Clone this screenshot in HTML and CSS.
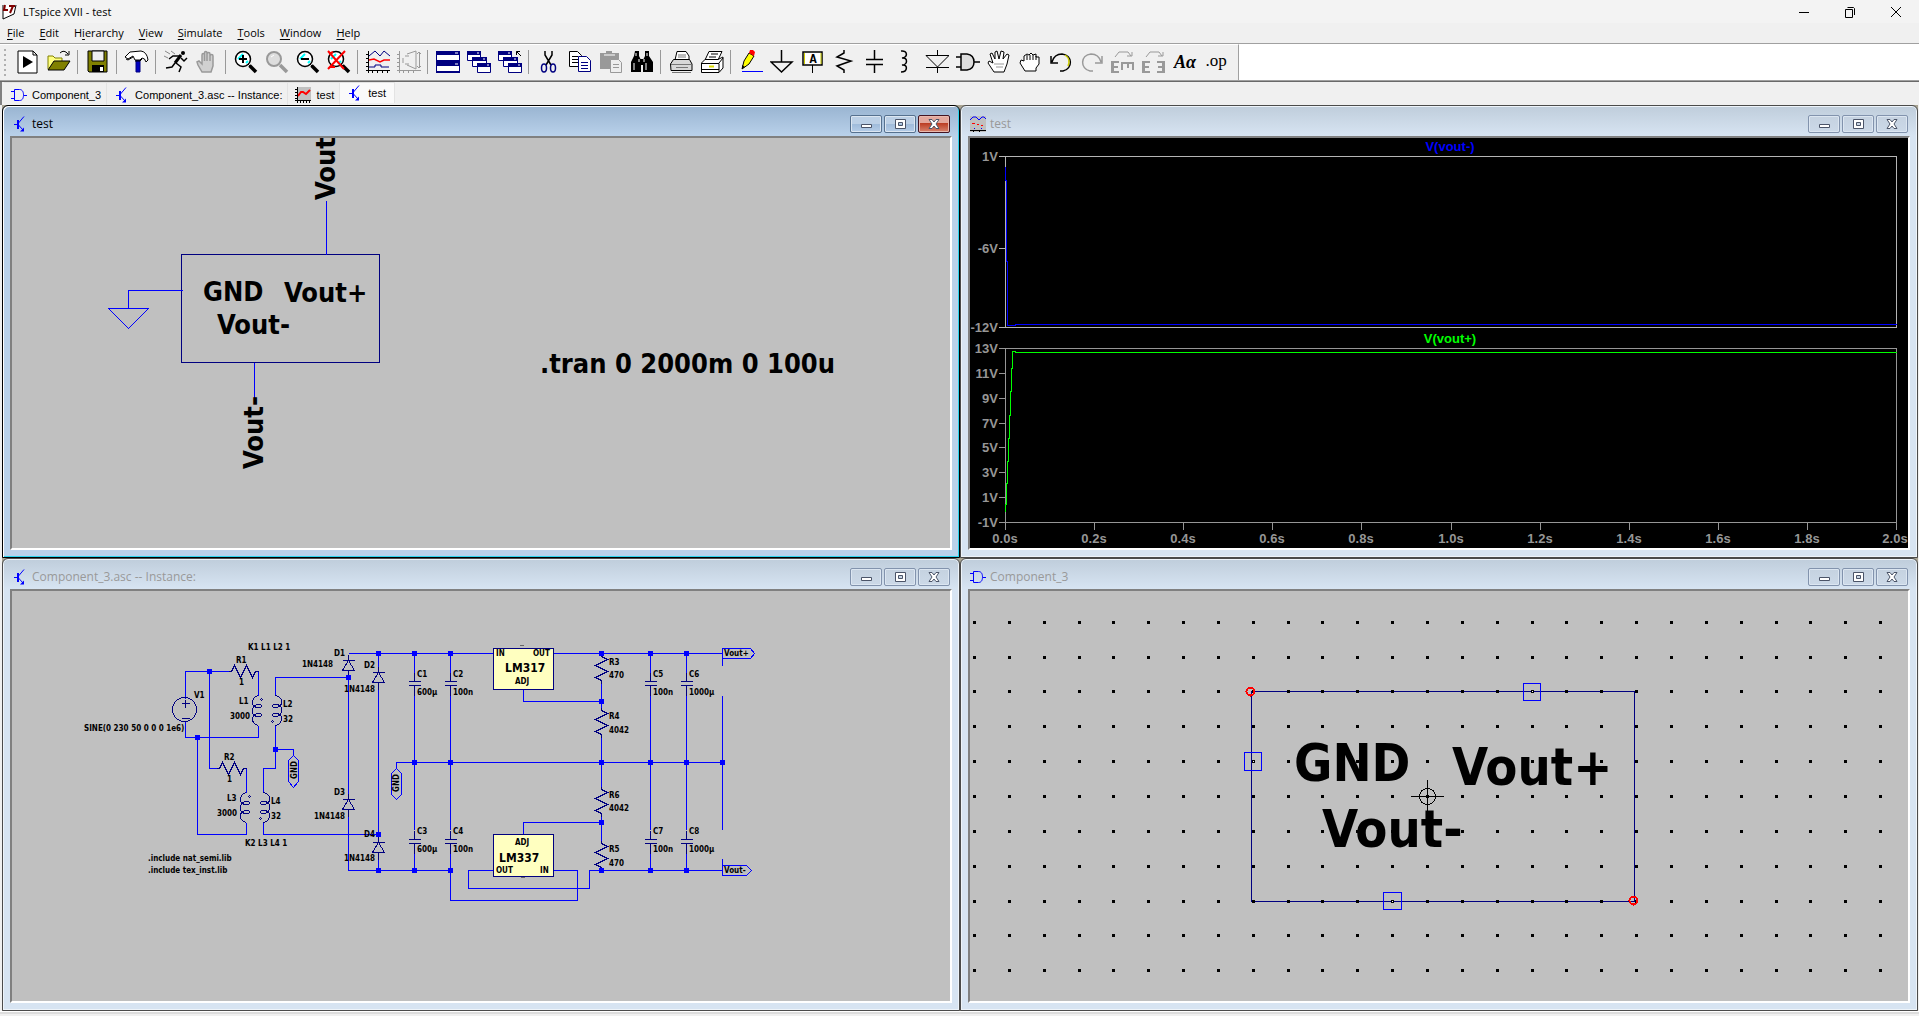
FILE: index.html
```html
<!DOCTYPE html>
<html lang="en">
<head>
<meta charset="utf-8">
<title>LTspice XVII - test</title>
<link rel="stylesheet" href="styles.css">
</head>
<body>
<svg class="sprite" aria-hidden="true">
  <symbol id="transistor" viewBox="0 0 16 16"><path class="b" d="M2 8.500H6M6.500 7L12 .5M6.500 9L11 14"/><path fill="#00f" d="M5 4H7V13H5ZM12 15.500H8L12 11.500Z"/></symbol>
  <symbol id="gate" viewBox="0 0 16 16"><path class="b" d="M0 4.500H3M0 11.500H3M3.500 2.500V13.500H8.500C12 13.500 12.500 10 12.500 8S12 2.500 8.500 2.500ZM13 8.500H16"/></symbol>
  <symbol id="wave" viewBox="0 0 16 16"><path fill="#c0c0c0" d="M0 0H16V16H0Z"/><path class="b" d="M0 4L3 1H6L9 4L12 1H14L16 3"/><path fill="#f00" d="M2 7H5V8H2ZM7 8H9V9H7ZM11 9H13V10H11Z"/><path fill="#00f" d="M4 12H5V13H4ZM11 12H12V13H11Z"/><path fill="#000" d="M0 14H16V15H0ZM3 15H4V16H3ZM9 15H10V16H9Z"/></symbol>
  <symbol id="graph" viewBox="0 0 16 16"><path fill="#c0c0c0" d="M2 0H16V13H2Z"/><path d="M3 9L6 5H8L11 7L15 3" fill="none" stroke="#f00" stroke-width="2"/><path d="M2.500 0V16M0 2.500H2M0 5.500H2M0 8.500H2M0 11.500H2M0 13.500H16M5.500 14V16M8.500 14V16M11.500 14V16M14.500 14V16" fill="none" stroke="#000"/></symbol>
  <symbol id="w-min" viewBox="0 0 12 10"><path d="M1.500 5.500H11.500V8.500H1.500Z" fill="#fff" stroke="#4b5468"/></symbol>
  <symbol id="w-max" viewBox="0 0 12 10"><path d="M1.500 .5H11.500V9.500H1.500ZM4.500 3.500H8.500V6.500H4.500Z" fill="#fff" fill-rule="evenodd" stroke="#4b5468"/></symbol>
  <symbol id="w-close" viewBox="0 0 12 10"><path d="M1 .5H4L6 3L8 .5H11L8 5L11 9.500H8L6 7L4 9.500H1L4 5Z" fill="#fff" stroke="#4b5468"/></symbol>
  <symbol id="lens" viewBox="0 0 24 24"><circle cx="9" cy="9" r="7.500" fill="#fff" stroke="#000" stroke-width="1.500"/><path d="M4 9L9 4M12 13L14 11" stroke="#0ff" stroke-width="2"/><path d="M14 14L16 16" stroke="#000"/><path d="M15.500 15.500L22 22" stroke="#000" stroke-width="3.500"/></symbol>
  <symbol id="cascade" viewBox="0 0 24 24"><path d="M.5 1.500H13.500V10.500H.5ZM5.500 7.500H19.500V16.500H5.500ZM10.500 13.500H23.500V22.500H10.500Z" fill="#fff" stroke="#000080"/><path d="M0 1H14V5H0ZM5 7H20V11H5ZM10 13H24V17H10Z" fill="#000080"/><path d="M10 3H12M16 9H18M20 15H22" stroke="#fff"/></symbol>
  <symbol id="hand" viewBox="0 0 24 24"><path d="M7 22L3 15L2 12L4 11L7 14V5C7 3 9.500 3 9.500 5V3C9.500 1 12 1 12 3V4C12 2 15 2 15 4V6C15 4 18 4 18 6V16L16 22Z"/><path d="M9.500 5V11M12 4V11M15 6V11" fill="none"/></symbol>
  <symbol id="res" overflow="visible"><path d="M0 0V3L6 6L-6 12L6 18L-6 24L0 27V30"/></symbol>
  <symbol id="ind" overflow="visible"><path d="M0 0C-4 1-6 3-6 7S-4 12 0 12S5 9 0 9S-6 12-6 16S-4 21 0 21S5 18 0 18S-6 21-6 24S-4 29 0 30M3 3L4 4L3 5L2 4Z"/></symbol>
  <symbol id="dio" overflow="visible"><path d="M-6 0H6M0-6V0L6 10H-6L0 0M0 10V17"/></symbol>
  <symbol id="cap" overflow="visible"><path d="M0-9V0M-6 0H6M-6 4H6M0 4V14"/></symbol>
</svg>

<header class="titlebar">
  <svg class="app-icon" viewBox="0 0 16 16"><path d="M2 1V15L13 10L15 1" fill="#fff" stroke="#000"/><path d="M4 1L3 6H7M8 2H14M12 2L9 9" fill="none" stroke="#800000" stroke-width="2"/></svg>
  <h1>LTspice XVII - test</h1>
  <div class="caption">
    <button aria-label="Minimize"><svg viewBox="0 0 12 12"><path d="M1 6.500H11"/></svg></button>
    <button aria-label="Restore"><svg viewBox="0 0 12 12"><path d="M1.500 3.500H8.500V11.500H1.500ZM3.500 1.500H9.500L10.500 2.500V9"/></svg></button>
    <button aria-label="Close"><svg viewBox="0 0 12 12"><path d="M1 1L11 11M11 1L1 11"/></svg></button>
  </div>
</header>
<nav class="menubar">
  <button><u>F</u>ile</button><button><u>E</u>dit</button><button>H<u>i</u>erarchy</button><button><u>V</u>iew</button><button><u>S</u>imulate</button><button><u>T</u>ools</button><button><u>W</u>indow</button><button><u>H</u>elp</button>
</nav>
<div class="toolrow">
<div class="toolbar" role="toolbar" aria-label="Main">
  <span class="grip"></span>
  <button aria-label="New schematic"><svg viewBox="0 0 24 24"><path d="M2 1H17L21 5V23H2Z" fill="#fff" stroke="#000"/><path d="M17 1V5H21" fill="none" stroke="#000"/><path d="M7 6L17 12L7 18Z"/></svg></button>
  <button aria-label="Open"><svg viewBox="0 0 24 24"><path d="M1 19V6H6L8 8H15V12" fill="#ffff80" stroke="#808000"/><path d="M1 20L7 11H23L17 20Z" fill="#808000" stroke="#000"/><path d="M13 3Q17-1 21 4M22 1V5H18" fill="none" stroke="#000"/></svg></button>
  <span class="sep"></span>
  <button aria-label="Save"><svg viewBox="0 0 24 24"><path d="M2 1H21V22H3L2 21Z" fill="#808000" stroke="#000"/><path d="M6 1H18V11H6Z" fill="#f0f0f0" stroke="#000"/><path d="M6 15H18V22H6Z"/><path d="M14 17H17V21H14Z" fill="#fff"/></svg></button>
  <span class="sep"></span>
  <button aria-label="Control panel"><svg viewBox="0 0 24 24"><path d="M11 10H15V22H11Z" fill="#0000c0" stroke="#000080"/><path d="M0 7L5 2L16 1Q22 2 23 10L21 12Q20 8 17 8L15 10H10L8 6L3 9Z" fill="#fff" stroke="#000"/><path d="M1 9L3 10L8 7M10 11H15L17 9" fill="none" stroke="#000"/></svg></button>
  <span class="sep"></span>
  <button aria-label="Run"><svg viewBox="0 0 24 24"><circle cx="19" cy="3" r="2"/><path d="M17 5L11 13" stroke="#000" stroke-width="3"/><path d="M16 6L9 6L5 9M17 8L20 11L23 8M12 13L17 17L15 22M11 13L8 17L2 18" fill="none" stroke="#000" stroke-width="1.500"/><path d="M1 1L6 4M7 1L11 4M0 6L4 8" stroke="#888"/></svg></button>
  <button aria-label="Halt" disabled><svg viewBox="0 0 24 24" fill="#d0d0d0" stroke="#999" stroke-width="1.500"><use href="#hand"/></svg></button>
  <span class="sep"></span>
  <button aria-label="Zoom in"><svg viewBox="0 0 24 24"><use href="#lens"/><path d="M9 5V13M5 9H13" stroke="#000" stroke-width="2"/></svg></button>
  <button aria-label="Pan" disabled><svg viewBox="0 0 24 24" fill="none" stroke="#999"><circle cx="9" cy="9" r="7" stroke-width="2" fill="#ddd"/><path d="M6 7L9 5" stroke="#fff"/><path d="M15 15L22 22" stroke-width="3.500"/></svg></button>
  <button aria-label="Zoom out"><svg viewBox="0 0 24 24"><use href="#lens"/><path d="M5 9H13" stroke="#000" stroke-width="2"/></svg></button>
  <button aria-label="Zoom to fit"><svg viewBox="0 0 24 24"><use href="#lens"/><path d="M1 1L17 19M18 1L1 19M2 4L6 2M3 17H8" stroke="#f00" stroke-width="2"/></svg></button>
  <span class="sep"></span>
  <button aria-label="Autorange"><svg viewBox="0 0 24 24" fill="none" stroke="#000"><path d="M2.500 1V23M0 4.500H2M0 8.500H2M0 12.500H2M0 16.500H2M0 20.500H24M6.500 20V23M11.500 20V23M16.500 20V23M21.500 20V23"/><path d="M3 6L9 1L14 6L18 1L24 6M3 17H9V15H15V17H23" stroke="#000080"/><path d="M3 10L8 9L14 12L18 10H24" stroke="#f00" stroke-width="1.500"/></svg></button>
  <button aria-label="Plot settings" disabled><svg viewBox="0 0 24 24" fill="none" stroke="#999"><path d="M2.500 1V23M0 4.500H2M0 8.500H2M0 12.500H2M0 16.500H2M0 20.500H24M6.500 20V23M11.500 20V23M16.500 20V23M22.500 2V18M10 4L19 1V19L10 15M6 8V13M8 6H12M8 14H12M20 4L22 2L24 4M20 16L22 18L24 16"/></svg></button>
  <span class="sep"></span>
  <button aria-label="Tile windows"><svg viewBox="0 0 24 24"><path d="M.5 1.500H23.500V22.500H.5Z" fill="#fff" stroke="#000080"/><path d="M0 1H24V5H0ZM0 10H24V16H0ZM0 21H24V23H0Z" fill="#000080"/><path d="M19 3H22M19 14H22" stroke="#fff"/></svg></button>
  <button aria-label="Cascade windows"><svg viewBox="0 0 24 24"><use href="#cascade"/></svg></button>
  <button aria-label="Close all windows"><svg viewBox="0 0 24 24"><use href="#cascade"/><path d="M18.500 5V1.500H22M18.500 1.500L23 6" fill="none" stroke="#000"/></svg></button>
  <span class="sep"></span>
  <button aria-label="Cut"><svg viewBox="0 0 24 24" fill="none"><path d="M8 1V5L14 15M15 1V5L9 15" stroke="#000" stroke-width="1.500"/><ellipse cx="7" cy="18" rx="2.500" ry="4" stroke="#000080" stroke-width="1.500"/><ellipse cx="16" cy="18" rx="2.500" ry="4" stroke="#000080" stroke-width="1.500"/></svg></button>
  <button aria-label="Copy"><svg viewBox="0 0 24 24"><path d="M1.500 1.500H9.500L13.500 5.500V16.500H1.500Z" fill="#fff" stroke="#000"/><path d="M4 6.500H10M4 9.500H11M4 12.500H10" stroke="#000"/><path d="M10.500 6.500H18.500L22.500 10.500V21.500H10.500Z" fill="#fff" stroke="#000080"/><path d="M13 12.500H20M13 15.500H20M13 18.500H20" stroke="#000080"/></svg></button>
  <button aria-label="Paste" disabled><svg viewBox="0 0 24 24"><path d="M1 3H7V1H13V3H20V19H1Z" fill="#999"/><path d="M5 4H16V6H5Z" fill="#ccc"/><path d="M11.500 9.500H19.500L22.500 12.500V22.500H11.500Z" fill="#eee" stroke="#999"/><path d="M14 14.500H20M14 17.500H20" stroke="#999"/></svg></button>
  <button aria-label="Find"><svg viewBox="0 0 24 24"><path d="M5 1H9V6L11 10V22H1V12L4 6ZM15 1H19V6L23 12V22H13V10L15 6ZM10 9H14V15H10Z"/><path d="M6 3V6M17 3V6M4 13V20M16 13V20M9 9V12M14 9V12" stroke="#fff"/></svg></button>
  <span class="sep"></span>
  <button aria-label="Print"><svg viewBox="0 0 24 24" stroke="#000"><path d="M8 1.500H17L20 6V10H6Z" fill="#fff"/><path d="M4.500 9.500H20.500L23 14V20.500H2L1.500 14Z" fill="#d8d8d8"/><path d="M2 14.500H22M3 22.500H22M9 5H17M9 7H17M7 17.500H19" stroke="#777"/></svg></button>
  <button aria-label="Print setup"><svg viewBox="0 0 24 24" stroke="#000"><path d="M9 1.500H22L18 10H5Z" fill="#fff"/><path d="M5 9.500H18L23 7V18L19 22.500H1.500V13Z" fill="#fff"/><path d="M2 13.500H19V22M19 13L23 8M11 4H18M9 7H16M2 19.500H19" fill="none"/><path d="M9 16.500H14" stroke="#dd0" stroke-width="2"/></svg></button>
  <span class="sep"></span>
  <button aria-label="Draw wire"><svg viewBox="0 0 24 24"><path d="M3 19L5 11L10 3L15 6L10 14Z" fill="#ff0" stroke="#000"/><path d="M10 3L11 0H14L16 2L15 6Z" fill="#f00"/><path d="M3 19V15L6 17Z"/><path d="M3 21.500H24" stroke="#00f"/></svg></button>
  <button aria-label="Ground"><svg viewBox="0 0 24 24" fill="none" stroke="#000" stroke-width="1.500"><path d="M11.500 0V12H1L11.500 22L22 12H11.500"/></svg></button>
  <button aria-label="Label net"><svg viewBox="0 0 24 24"><path d="M2 2H21V15H2Z" fill="#fff" stroke="#000" stroke-width="1.500"/><path d="M3.500 3V14M20 3V14" stroke="#cc0"/><path d="M11.500 15V23" stroke="#000"/><text class="ic" x="12" y="13" font-size="12">A</text></svg></button>
  <button aria-label="Resistor"><svg viewBox="0 0 24 24" fill="none" stroke="#000"><path stroke-width="1.500" d="M12 0V3L5 7L19 11L5 16L12 20V23"/></svg></button>
  <button aria-label="Capacitor"><svg viewBox="0 0 24 24" fill="none" stroke="#000" stroke-width="1.500"><path d="M11.500 0V9M3 9.500H20M3 14.500H20M11.500 15V23"/></svg></button>
  <button aria-label="Inductor"><svg viewBox="0 0 24 24" fill="none" stroke="#000" stroke-width="1.500"><path d="M7 1C14 0 14 8 8 8C14 7 14 15 8 15C14 14 14 22 7 22"/></svg></button>
  <button aria-label="Diode"><svg viewBox="0 0 24 24" fill="none" stroke="#000"><path d="M12.500 0V5M1 5.500H24L12.500 17ZM1 17.500H24M12.500 17V23"/></svg></button>
  <button aria-label="Component"><svg viewBox="0 0 24 24" fill="#ddd" stroke="#000" stroke-width="1.500"><path d="M0 7H5M0 17H5M5 4V20H11Q18 19 18 12T11 4ZM18 12H24"/></svg></button>
  <button aria-label="Move"><svg viewBox="0 0 24 24" fill="#fff" stroke="#000"><path d="M7 22L1 13L2 11L6 13L3 4L5 3L8 9L8 2L10 1L12 9L14 1L17 2L16 9L20 4L22 5L20 14L17 22Z"/><path d="M7 14H17M9 17H16" stroke="#999" fill="none"/></svg></button>
  <button aria-label="Drag"><svg viewBox="0 0 24 24" fill="#fff" stroke="#000"><path d="M7 21L2 13L3 10L6 11V6L9 4L11 5L13 3L15 5L18 4V7L21 7V14L18 18V21Z"/><path d="M9 5V10M12 5V10M15 5V10M18 6V10"/></svg></button>
  <button aria-label="Undo"><svg viewBox="0 0 24 24" fill="none" stroke="#000" stroke-width="1.500"><path d="M3 12C5 5 9 4 13 4C24 5 24 19 14 21H11M2 6V13H9"/><path d="M16 5Q22 9 19 16" stroke="#cc0"/></svg></button>
  <button aria-label="Redo" disabled><svg viewBox="0 0 24 24" fill="none" stroke="#999" stroke-width="1.500"><path d="M21 12C19 5 15 4 11 4C0 5 0 19 10 21H13M22 6V13H15"/></svg></button>
  <button aria-label="Rotate" disabled><svg viewBox="0 0 24 24"><path d="M4 7L8 2H17L20 6M16 6H21V2" fill="none" stroke="#999"/><path d="M0 11H8V13H3V16H7V18H3V21H8V23H0ZM10 12H23V20H21V14H18V18H16V14H12V20H10Z" fill="#999"/></svg></button>
  <button aria-label="Mirror" disabled><svg viewBox="0 0 24 24"><path d="M4 7L8 2H17L20 6M16 6H21V2" fill="none" stroke="#999"/><path d="M0 11H8V13H3V16H7V18H3V21H8V23H0ZM15 11H23V23H15V21H20V18H16V16H20V13H15Z" fill="#999"/></svg></button>
  <button aria-label="Text"><svg viewBox="0 0 24 24"><text class="ic serif" x="12" y="18" font-size="18">Aα</text></svg></button>
  <button aria-label="SPICE directive"><svg viewBox="0 0 24 24"><text class="ic op" x="12" y="16" font-size="17">.op</text></svg></button>
</div>
</div>
<div class="tabs" role="tablist">
  <button role="tab"><svg class="i16"><use href="#gate"/></svg>Component_3</button>
  <button role="tab"><svg class="i16"><use href="#transistor"/></svg>Component_3.asc -- Instance:</button>
  <button role="tab"><svg class="i16"><use href="#graph"/></svg>test</button>
  <button role="tab" class="on" aria-selected="true"><svg class="i16"><use href="#transistor"/></svg>test</button>
</div>

<main class="mdi">
<section class="win active">
  <header><svg class="i16"><use href="#transistor"/></svg><h2>test</h2>
    <div class="wb"><button aria-label="Minimize"><svg><use href="#w-min"/></svg></button><button aria-label="Maximize"><svg><use href="#w-max"/></svg></button><button class="close" aria-label="Close"><svg><use href="#w-close"/></svg></button></div></header>
  <div class="client"><svg viewBox="12 138 938 410" preserveAspectRatio="xMinYMin slice">
    <g class="line" transform="translate(.5 .5)">
      <path class="navy" d="M181 254H379V362H181Z"/>
      <path d="M326 200V254M254 362V399M182 290H128V308M108 308H148L128 328Z"/>
    </g>
    <g class="tah" font-size="27">
      <text x="203" y="301">GND</text><text x="284" y="302">Vout+</text><text x="217" y="334">Vout-</text>
      <text x="540" y="373">.tran 0 2000m 0 100u</text>
      <text transform="translate(335 200) rotate(-90)">Vout</text>
      <text transform="translate(263 469) rotate(-90)">Vout-</text>
    </g>
  </svg></div>
</section>

<section class="win">
  <header><svg class="i16"><use href="#wave"/></svg><h2>test</h2>
    <div class="wb"><button aria-label="Minimize"><svg><use href="#w-min"/></svg></button><button aria-label="Maximize"><svg><use href="#w-max"/></svg></button><button aria-label="Close"><svg><use href="#w-close"/></svg></button></div></header>
  <div class="client plot"><svg viewBox="970 138 938 410" preserveAspectRatio="xMinYMin slice">
    <g class="line" transform="translate(.5 .5)">
      <path stroke="#b4b4b4" d="M998 156H1896V327H998M1005 156V327M998 248H1005"/>
      <path stroke="#969696" d="M998 348H1896V529M998 522H1896M1005 348V529M998 373H1005M998 398H1005M998 423H1005M998 447H1005M998 472H1005M998 497H1005M1094 522V529M1183 522V529M1272 522V529M1361 522V529M1451 522V529M1540 522V529M1629 522V529M1718 522V529M1807 522V529"/>
      <path d="M1005 166V180H1006V261H1007V325H1015V324H1896"/>
      <path stroke="#0f0" d="M1005 511V504H1006V483H1007V461H1008V438H1009V415H1010V391H1011V368H1012V351H1015V352H1896"/>
    </g>
    <g class="ax" text-anchor="end" fill="#b4b4b4"><text x="998" y="161">1V</text><text x="998" y="253">-6V</text><text x="998" y="332">-12V</text></g>
    <g class="ax" text-anchor="end"><text x="998" y="353">13V</text><text x="998" y="378">11V</text><text x="998" y="403">9V</text><text x="998" y="428">7V</text><text x="998" y="452">5V</text><text x="998" y="477">3V</text><text x="998" y="502">1V</text><text x="998" y="527">-1V</text></g>
    <g class="ax" text-anchor="middle"><text x="1005" y="543">0.0s</text><text x="1094" y="543">0.2s</text><text x="1183" y="543">0.4s</text><text x="1272" y="543">0.6s</text><text x="1361" y="543">0.8s</text><text x="1451" y="543">1.0s</text><text x="1540" y="543">1.2s</text><text x="1629" y="543">1.4s</text><text x="1718" y="543">1.6s</text><text x="1807" y="543">1.8s</text><text x="1895" y="543">2.0s</text>
    <text x="1450" y="151" fill="#00f">V(vout-)</text><text x="1450" y="343" fill="#0f0">V(vout+)</text></g>
  </svg></div>
</section>

<section class="win">
  <header><svg class="i16"><use href="#transistor"/></svg><h2>Component_3.asc -- Instance:</h2>
    <div class="wb"><button aria-label="Minimize"><svg><use href="#w-min"/></svg></button><button aria-label="Maximize"><svg><use href="#w-max"/></svg></button><button aria-label="Close"><svg><use href="#w-close"/></svg></button></div></header>
  <div class="client"><svg viewBox="12 591 938 410" preserveAspectRatio="xMinYMin slice">
    <g class="line" transform="translate(.5 .5)">
      <path d="M185 698V671H228M209 671V768H216M258 671V695M258 725V737H185V721M197 737V834H246V822M246 768V792M275 695V677H348M275 725V768H263V792M275 749H293V755M263 822V834H378M348 653H493M348 677V793M348 815V870H450M378 653V666M378 689V836M378 858V870M414 653V672M414 695V829M414 853V870M450 653V672M450 695V829M450 853V900H577V870H553M650 653V672M650 695V829M650 853V870M686 653V672M686 695V829M686 853V870M396 768V762H722M553 653H722M523 689V701H601M601 683V707M601 737V786M601 816V840M523 834V822H601M493 870H468V888H589V870H722M722 665V648H750L754 653L750 658H722M722 695V829M722 858V875H746L751 870L746 865H722"/>
      <path d="M293 755L298 760V781L293 787L288 781V760ZM396 768L401 773V794L396 799L391 794V773Z"/>
      <g class="navy">
        <circle cx="184" cy="709" r="12"/><path d="M181 703H189M185 699V707M181 718H189"/>
        <use href="#res" transform="translate(258 671) rotate(90)"/><use href="#res" transform="translate(246 768) rotate(90)"/>
        <use href="#res" x="601" y="653"/><use href="#res" x="601" y="707"/><use href="#res" x="601" y="786"/><use href="#res" x="601" y="840"/>
        <use href="#ind" x="258" y="695"/><use href="#ind" x="246" y="792"/>
        <use href="#ind" transform="translate(275 725) rotate(180)"/><use href="#ind" transform="translate(263 822) rotate(180)"/>
        <use href="#dio" x="348" y="660"/><use href="#dio" x="378" y="672"/><use href="#dio" x="348" y="799"/><use href="#dio" x="378" y="842"/>
        <use href="#cap" x="414" y="681"/><use href="#cap" x="450" y="681"/><use href="#cap" x="650" y="681"/><use href="#cap" x="686" y="681"/>
        <use href="#cap" x="414" y="839"/><use href="#cap" x="450" y="839"/><use href="#cap" x="650" y="839"/><use href="#cap" x="686" y="839"/>
        <path class="chip" d="M493 648H553V689H493ZM493 834H553V876H493Z"/>
      </g>
    </g>
    <path class="node" d="M207 669h5v5h-5zM195 735h5v5h-5zM273 747h5v5h-5zM346 675h5v5h-5zM376 651h5v5h-5zM376 832h5v5h-5zM376 868h5v5h-5zM412 651h5v5h-5zM412 760h5v5h-5zM412 868h5v5h-5zM448 651h5v5h-5zM448 760h5v5h-5zM448 868h5v5h-5zM599 651h5v5h-5zM599 699h5v5h-5zM599 760h5v5h-5zM599 820h5v5h-5zM599 868h5v5h-5zM648 651h5v5h-5zM648 760h5v5h-5zM648 868h5v5h-5zM684 651h5v5h-5zM684 760h5v5h-5zM684 868h5v5h-5zM720 760h5v5h-5z"/>
    <path fill="#666" d="M520 645h4v1h-4zM521 877h4v1h-4z"/>
    <g class="tah" font-size="8">
      <text x="248" y="650">K1 L1 L2 1</text><text x="236" y="663">R1</text><text x="239" y="685">1</text><text x="194" y="698">V1</text><text x="84" y="731">SINE(0 230 50 0 0 0 1e6)</text>
      <text x="239" y="704">L1</text><text x="230" y="719">3000</text><text x="283" y="707">L2</text><text x="283" y="722">32</text>
      <text x="224" y="760">R2</text><text x="227" y="782">1</text><text x="227" y="801">L3</text><text x="217" y="816">3000</text><text x="271" y="804">L4</text><text x="271" y="819">32</text>
      <text x="245" y="846">K2 L3 L4 1</text><text x="148" y="861">.include nat_semi.lib</text><text x="148" y="873">.include tex_inst.lib</text>
      <text x="334" y="656">D1</text><text x="302" y="667">1N4148</text><text x="364" y="668">D2</text><text x="344" y="692">1N4148</text><text x="334" y="795">D3</text><text x="314" y="819">1N4148</text><text x="364" y="837">D4</text><text x="344" y="861">1N4148</text>
      <text x="417" y="677">C1</text><text x="417" y="695">600µ</text><text x="453" y="677">C2</text><text x="453" y="695">100n</text><text x="653" y="677">C5</text><text x="653" y="695">100n</text><text x="689" y="677">C6</text><text x="689" y="695">1000µ</text>
      <text x="417" y="834">C3</text><text x="417" y="852">600µ</text><text x="453" y="834">C4</text><text x="453" y="852">100n</text><text x="653" y="834">C7</text><text x="653" y="852">100n</text><text x="689" y="834">C8</text><text x="689" y="852">1000µ</text>
      <text x="496" y="656">IN</text><text x="533" y="656">OUT</text><text x="515" y="684">ADJ</text><text x="515" y="845">ADJ</text><text x="496" y="873">OUT</text><text x="540" y="873">IN</text>
      <text x="505" y="672" font-size="12">LM317</text><text x="499" y="862" font-size="12">LM337</text>
      <text x="609" y="665">R3</text><text x="609" y="678">470</text><text x="609" y="719">R4</text><text x="609" y="733">4042</text><text x="609" y="798">R6</text><text x="609" y="811">4042</text><text x="609" y="852">R5</text><text x="609" y="866">470</text>
      <text x="724" y="656">Vout+</text><text x="724" y="873">Vout-</text>
      <text transform="translate(297 779) rotate(-90)">GND</text><text transform="translate(399 792) rotate(-90)">GND</text>
    </g>
  </svg></div>
</section>

<section class="win">
  <header><svg class="i16"><use href="#gate"/></svg><h2>Component_3</h2>
    <div class="wb"><button aria-label="Minimize"><svg><use href="#w-min"/></svg></button><button aria-label="Maximize"><svg><use href="#w-max"/></svg></button><button aria-label="Close"><svg><use href="#w-close"/></svg></button></div></header>
  <div class="client"><svg viewBox="970 591 938 410" preserveAspectRatio="xMinYMin slice">
    <g class="line" transform="translate(.5 .5)"><path class="navy" d="M1251 691H1634V901H1251Z"/></g>
    <path class="grid" transform="translate(0 .5)" d="M973 622H1882M973 657H1882M973 691H1882M973 726H1882M973 761H1882M973 796H1882M973 831H1882M973 866H1882M973 901H1882M973 935H1882M973 970H1882"/>
    <path fill="#fff" d="M1532 691h1v1h-1zM1253 761h1v1h-1zM1392 901h1v1h-1z"/>
    <g class="line" transform="translate(.5 .5)">
      <path d="M1523 683H1540V700H1523ZM1244 752H1261V770H1244ZM1383 892H1401V909H1383Z"/>
      <path stroke="#000" d="M1410 796H1443M1427 779V811"/><circle stroke="#000" cx="1427" cy="796" r="8"/>
      <g stroke="#f00" stroke-width="2"><circle cx="1250" cy="691" r="4"/><circle cx="1633" cy="900" r="4"/></g>
    </g>
    <g class="tah" font-size="52"><text x="1294" y="781">GND</text><text x="1452" y="785">Vout+</text><text x="1322" y="847">Vout-</text></g>
  </svg></div>
</section>
</main>
<footer class="status"></footer>
</body>
</html>
```
FILE: styles.css
```css
* { box-sizing: border-box; }

body {
  margin: 0;
  min-height: 100vh;
  display: flex;
  flex-direction: column;
  background: #f0f0f0;
  color: #000;
  font: 12px/16px "Open Sans", sans-serif;
}

button {
  margin: 0;
  padding: 0;
  border: 0;
  background: none;
  color: inherit;
  font: inherit;
}

h1, h2 { margin: 0; font: inherit; }
.sprite { position: absolute; width: 0; height: 0; }
.b { fill: none; stroke: #00f; }
.i16 { width: 16px; height: 16px; flex: none; }

.titlebar {
  display: flex;
  align-items: center;
  gap: 6px;
  height: 23px;
  padding-left: 1px;
  background: #f3f3f3;
}
.app-icon { width: 16px; height: 16px; }
.titlebar h1 { flex: 1; font-size: 11px; }
.caption { display: flex; }
.caption button { width: 46px; height: 20px; }
.caption svg { width: 12px; height: 12px; fill: none; stroke: #000; display: block; margin: auto; }

.menubar {
  display: flex;
  gap: 15px;
  height: 21px;
  padding: 0 7px;
  border-bottom: 1px solid #a0a0a0;
  font-size: 11px;
}
u { text-underline-offset: 2px; }

.toolrow {
  display: flex;
  background: #fff;
  border-bottom: 1px solid #696969;
  box-shadow: inset 0 -1px #a0a0a0;
}
.toolbar {
  display: flex;
  height: 37px;
  padding: 0 7px 0 4px;
  background: #f0f0f0;
  border-top: 1px solid #fff;
  border-right: 1px solid #a0a0a0;
  box-shadow: inset 0 -1px #a0a0a0;
}
.grip {
  width: 2px;
  height: 28px;
  margin: 4px 6px 0 0;
  background: repeating-linear-gradient(#b0b0b0 0 2px, transparent 2px 5px);
}
.toolbar button { width: 31px; height: 34px; }
.toolbar svg { width: 24px; height: 24px; display: block; margin: auto; }
.sep {
  width: 8px;
  height: 24px;
  margin-top: 5px;
  background: linear-gradient(#999, #999) 3px 0 / 1px 100% no-repeat;
}
.ic { text-anchor: middle; font-family: "Liberation Mono", monospace; font-weight: bold; }
.ic.serif { font-family: "Liberation Serif", serif; font-style: italic; }
.ic.op { font-family: "Liberation Serif", serif; font-weight: normal; }

.tabs {
  display: flex;
  height: 23px;
  padding: 0 2px;
  border-left: 2px solid #808080;
  font: 11px/14px "Liberation Sans", sans-serif;
}
.tabs button {
  display: flex;
  align-items: center;
  gap: 5px;
  padding: 1px 5px 0 7px;
  border: solid #e3e3e3;
  border-width: 1px 1px 0 0;
}
.tabs .on { height: 21px; padding: 0 8px 0 7px; background: #fafafa; }

.mdi {
  flex: 1;
  display: grid;
  grid-template: 1fr 1fr / 1fr 1fr;
  margin: 0 1px 0 2px;
  background: #a9a493;
}
.win {
  display: flex;
  flex-direction: column;
  min-width: 0;
  min-height: 0;
  padding: 0 7px 7px;
  border: 1px solid #4b4b4b;
  border-radius: 6px 6px 0 0;
  background: linear-gradient(#bfcddb, #d7e4f2 30px);
  box-shadow: inset 0 0 0 1px #eef4fa;
}
.win.active {
  border-color: #000;
  background: linear-gradient(#99b4d1, #b9d1ea 30px);
  box-shadow: inset 1px 1px #fff, inset -1px -1px #2bd3ee;
}
.win header {
  display: flex;
  align-items: center;
  gap: 4px;
  height: 30px;
  padding: 6px 2px 0;
  color: #999;
}
.win.active header { color: #000; }
.win h2 { flex: 1; }
.wb { display: flex; gap: 2px; }
.wb button {
  display: grid;
  place-items: center;
  width: 32px;
  height: 18px;
  border: 1px solid #8293ad;
  border-radius: 2px;
  background: linear-gradient(#c5d2e0, #ccd9e8);
  box-shadow: inset 0 0 0 1px #dce6f1;
}
.wb svg { width: 12px; height: 10px; }
.active .wb button { border-color: #56718f; background: linear-gradient(#bcd0e6 50%, #9fbbda 50%, #b5cde8); }
.active .wb .close {
  border-color: #431422;
  background: linear-gradient(#e3a79c 45%, #bb3c22 45%, #d88570);
  box-shadow: inset 0 0 0 1px #e8b9ae;
}
.client {
  flex: 1;
  position: relative;
  min-height: 0;
  overflow: hidden;
  border: 2px solid;
  border-color: #808080 #fff #fff #808080;
  background: #c0c0c0;
}
.plot { background: #000; }
.client svg { position: absolute; inset: 0; width: 100%; height: 100%; }

.line { fill: none; stroke: #00f; shape-rendering: crispEdges; }
.navy { stroke: #000080; }
.chip { fill: #ffffc0; }
.node { fill: #00f; }
.tah { font-family: "DejaVu Sans Condensed", "Noto Sans", sans-serif; font-weight: bold; }
.ax { fill: #969696; font: bold 13px "Liberation Sans", sans-serif; }
.grid {
  fill: none;
  stroke: #000;
  stroke-width: 3;
  shape-rendering: crispEdges;
  stroke-dasharray: 3 32 3 32 3 32 3 31 3 32 3 32 3 32 3 32 3 32 3 31 3 32 3 32 3 32 3 32 3 32 3 32 3 31 3 32 3 32 3 32 3 32 3 32 3 32 3 31 3 32 3 32 3 32;
}
.status { height: 5px; border-top: 1px solid #fff; box-shadow: inset 0 2px #ddd; }
```
